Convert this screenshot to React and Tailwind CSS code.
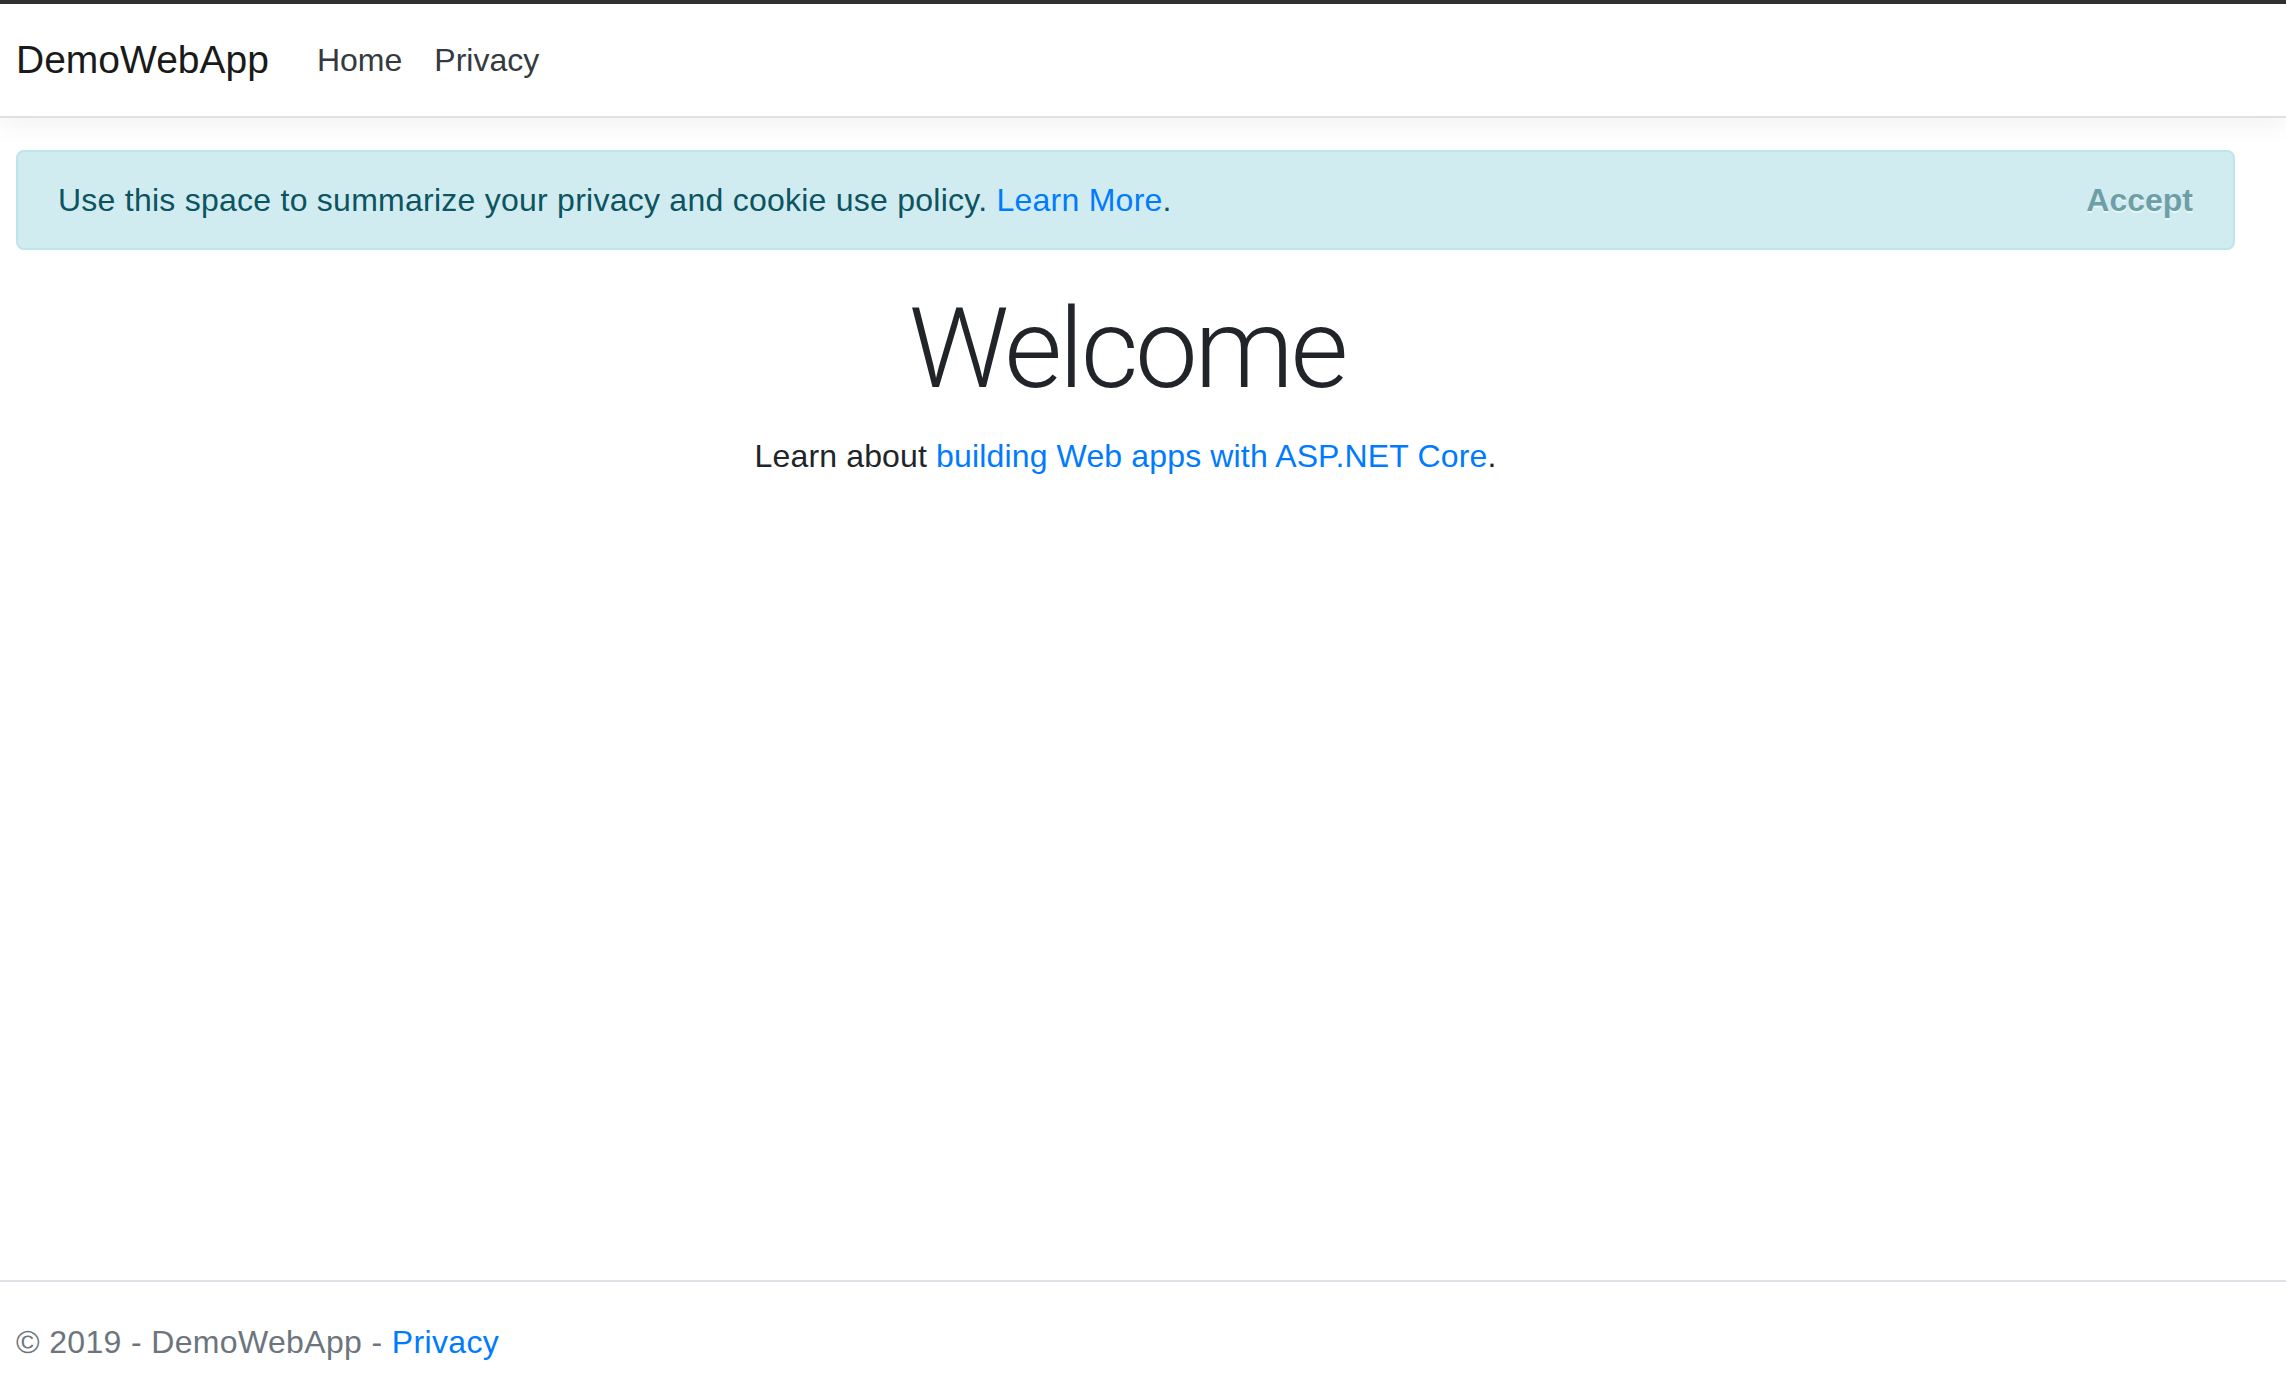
import React from 'react';

const sans = "font-['Liberation_Sans',Arial,sans-serif]";

function Navbar() {
  return (
    <header className="border-b-2 border-[#dee2e6] bg-white shadow-[0_8px_24px_rgba(0,0,0,0.05)]">
      <nav className="flex items-center px-4 py-4">
        <a className="mr-8 py-[10px] text-[39px] leading-[60px] text-[#1a1a1a]">DemoWebApp</a>
        <ul className="flex">
          <li><a className="block px-4 py-4 text-[32px] leading-[48px] text-[#343a40]">Home</a></li>
          <li><a className="block px-4 py-4 text-[32px] leading-[48px] text-[#343a40]">Privacy</a></li>
        </ul>
      </nav>
    </header>
  );
}

function CookieConsent() {
  return (
    <div className="relative mb-8 rounded-lg border-2 border-[#bee5eb] bg-[#d1ecf1] py-6 pl-10 pr-32 text-[32px] leading-[48px] tracking-[0.25px] text-[#0c5460]">
      Use this space to summarize your privacy and cookie use policy.{' '}
      <a className="text-[#007bff]">Learn More</a>.
      <button className="absolute right-0 top-0 px-10 py-6 text-[32px] font-bold leading-[48px] tracking-normal text-[#0c5460] opacity-50 [text-shadow:0_2px_0_#fff]">
        Accept
      </button>
    </div>
  );
}

export default function App() {
  return (
    <div className={`${sans} flex h-[1396px] flex-col overflow-hidden bg-white text-[#212529]`}>
      <div className="h-1 bg-[#2f3133]" />
      <Navbar />
      <main className="ml-4 mt-8 w-[2219px] flex-1">
        <CookieConsent />
        <div className="text-center">
          <h1 className="mb-4 pl-[3px] font-['Roboto',sans-serif] text-[112px] font-light leading-[134px] tracking-[-3.3px] text-[#212529]">Welcome</h1>
          <p className="text-[32px] leading-[48px] tracking-[0.15px]">
            Learn about <a className="text-[#007bff]">building Web apps with ASP.NET Core</a>.
          </p>
        </div>
      </main>
      <footer className="h-[116px] shrink-0 border-t-2 border-[#dee2e6] px-4 text-[32px] leading-[120px] tracking-[0.35px] whitespace-nowrap text-[#6c757d]">
        © 2019 - DemoWebApp - <a className="text-[#007bff]">Privacy</a>
      </footer>
    </div>
  );
}
